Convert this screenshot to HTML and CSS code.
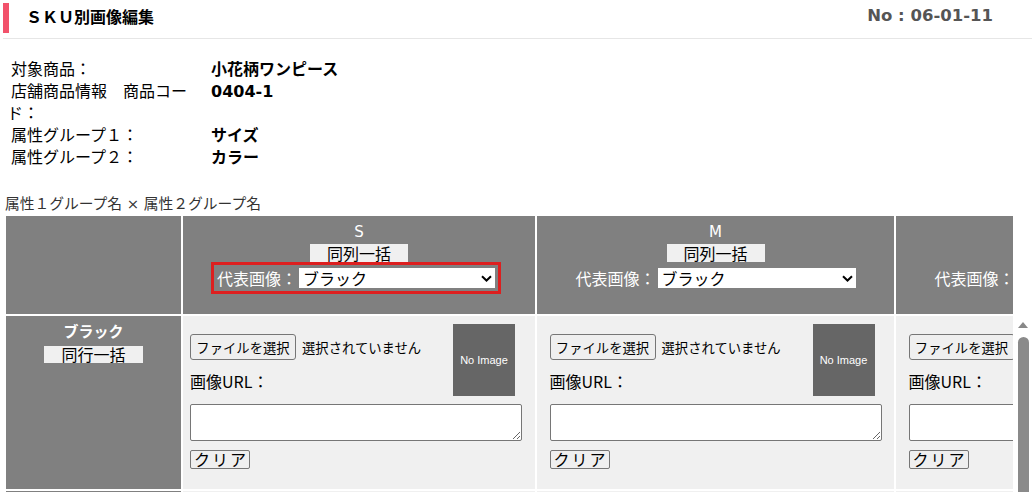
FILE: index.html
```html
<!DOCTYPE html>
<html lang="ja">
<head>
    <meta charset="UTF-8">
    <meta name="viewport" content="width=device-width, initial-scale=1.0">
    <title>ＳＫＵ別画像編集</title>
    <link rel="stylesheet" href="styles.css">
</head>
<body>
    <header class="page-head">
        <h1 class="page-title">ＳＫＵ別画像編集</h1>
        <span class="page-no">No : 06-01-11</span>
    </header>

    <div class="item-info">
        <div class="info-label">対象商品：</div>
        <div class="info-value">小花柄ワンピース</div>
        <div class="info-label">店舗商品情報　商品コード：</div>
        <div class="info-value">0404-1</div>
        <div class="info-label">属性グループ１：</div>
        <div class="info-value">サイズ</div>
        <div class="info-label">属性グループ２：</div>
        <div class="info-value">カラー</div>
    </div>

    <p class="grid-caption">属性１グループ名 × 属性２グループ名</p>

    <div class="sku-grid">
        <div class="grid-row grid-head">
            <div class="col-key head-cell"></div>
            <div class="col-s head-cell">
                <div class="size-name">S</div>
                <button class="bulk-btn">同列一括</button>
                <label class="main-pick is-error">代表画像：<select><option>ブラック</option><option>ホワイト</option></select></label>
            </div>
            <div class="col-m head-cell">
                <div class="size-name">M</div>
                <button class="bulk-btn">同列一括</button>
                <label class="main-pick">代表画像：<select><option>ブラック</option><option>ホワイト</option></select></label>
            </div>
            <div class="col-edge head-cell">
                <div class="edge-inner">
                    <div class="size-name">L</div>
                    <button class="bulk-btn">同列一括</button>
                    <label class="main-pick">代表画像：<select><option>ブラック</option><option>ホワイト</option></select></label>
                </div>
            </div>
        </div>

        <div class="body-wrap">
            <div class="grid-body">
                <div class="grid-row">
                    <div class="col-key key-cell">
                        <div class="color-name">ブラック</div>
                        <button class="bulk-btn row-btn">同行一括</button>
                    </div>
                    <div class="col-s upload-cell">
                        <div class="upload">
                            <div class="upload-top">
                                <div class="upload-fields">
                                    <div class="file-line"><button class="file-btn">ファイルを選択</button><span>選択されていません</span></div>
                                    <div class="url-label">画像URL：</div>
                                </div>
                                <div class="no-image">No Image</div>
                            </div>
                            <textarea class="url-box"></textarea>
                            <button class="clear-btn">クリア</button>
                        </div>
                    </div>
                    <div class="col-m upload-cell">
                        <div class="upload">
                            <div class="upload-top">
                                <div class="upload-fields">
                                    <div class="file-line"><button class="file-btn">ファイルを選択</button><span>選択されていません</span></div>
                                    <div class="url-label">画像URL：</div>
                                </div>
                                <div class="no-image">No Image</div>
                            </div>
                            <textarea class="url-box"></textarea>
                            <button class="clear-btn">クリア</button>
                        </div>
                    </div>
                    <div class="col-edge upload-cell">
                        <div class="edge-inner">
                            <div class="upload">
                                <div class="upload-top">
                                    <div class="upload-fields">
                                        <div class="file-line"><button class="file-btn">ファイルを選択</button><span>選択されていません</span></div>
                                        <div class="url-label">画像URL：</div>
                                    </div>
                                    <div class="no-image">No Image</div>
                                </div>
                                <textarea class="url-box"></textarea>
                                <button class="clear-btn">クリア</button>
                            </div>
                        </div>
                    </div>
                </div>

                <div class="grid-row">
                    <div class="col-key key-cell">
                        <div class="color-name">ホワイト</div>
                        <button class="bulk-btn row-btn">同行一括</button>
                    </div>
                    <div class="col-s upload-cell"></div>
                    <div class="col-m upload-cell"></div>
                    <div class="col-edge upload-cell"></div>
                </div>
            </div>

            <!-- vertical scrollbar of the row area -->
            <div class="scroll-rail">
                <span class="rail-up"></span>
                <span class="rail-thumb"></span>
            </div>
        </div>
    </div>
</body>
</html>
```

FILE: styles.css
```css
html,
body {
    margin: 0;
    height: 492px;
    overflow: hidden;
}
body {
    background-color: #fff;
    color: #000;
    font-family: "DejaVu Sans", "Noto Sans CJK JP", sans-serif;
    font-size: 16px;
}

/* page header */
.page-head {
    display: flex;
    justify-content: space-between;
    align-items: flex-start;
    height: 38px;
    margin-left: 3px;
    border-bottom: 1px solid #e6e6e6;
}
.page-title {
    margin: 3px 0 0;
    height: 30px;
    padding-left: 17px;
    border-left: 6px solid #f2526b;
    font-family: "Noto Sans CJK JP", sans-serif;
    font-size: 16px;
    font-weight: bold;
    line-height: 26px;
}
.page-no {
    margin-top: 3px;
    padding-right: 39px;
    color: #555;
    font-size: 16.5px;
    font-weight: bold;
    line-height: 26px;
}

/* item info */
.item-info {
    display: grid;
    grid-template-columns: 190px auto;
    justify-content: start;
    column-gap: 14px;
    margin-top: 20px;
    padding-left: 7px;
    line-height: 22px;
}
.info-label {
    text-indent: 4px;
}
.info-value {
    font-weight: bold;
}

.grid-caption {
    margin: 25px 0 0 5px;
    color: #333;
    font-size: 14.75px;
    line-height: 20px;
}

/* sku grid */
.sku-grid {
    margin: 2px 0 0 6px;
}
.grid-row {
    display: flex;
    gap: 2px;
}
.grid-row > * {
    flex: none;
    box-sizing: border-box;
}
.col-key {
    width: 175px;
}
.col-s {
    width: 352px;
}
.col-m {
    width: 357px;
}
/* last column is cut off by the right edge of the grid */
.col-edge {
    width: 117px;
    overflow: hidden;
}
.edge-inner {
    width: 357px;
}

.head-cell {
    height: 98px;
    padding-top: 6px;
    background-color: #808080;
    color: #fff;
    text-align: center;
    white-space: nowrap;
}
.size-name {
    font-size: 15px;
    line-height: 20px;
}
.bulk-btn {
    display: block;
    width: 98px;
    height: 18px;
    margin: 2px auto 0;
    padding: 0;
    border: 0;
    background-color: #f0f0f0;
    color: #000;
    font: 16px/18px "Noto Sans CJK JP", sans-serif;
}
.main-pick {
    display: inline-flex;
    align-items: center;
    gap: 2px;
    height: 20px;
    margin-top: 6px;
    font-family: "Noto Sans CJK JP", sans-serif;
    font-size: 16px;
}
.main-pick.is-error {
    margin-right: 6px;
    outline: 3px solid #dd1f1f;
    outline-offset: 3px;
}
.main-pick select {
    width: 198px;
    height: 20px;
    padding: 0 0 0 4px;
    border: 0;
    border-radius: 0;
    appearance: none;
    background: #fff url("data:image/svg+xml,%3Csvg xmlns='http://www.w3.org/2000/svg' width='11' height='7' viewBox='0 0 11 7'%3E%3Cpath d='M1 1.2l4.5 4.3 4.5-4.3' fill='none' stroke='%23000' stroke-width='2'/%3E%3C/svg%3E") no-repeat right 3px center;
    color: #000;
    font: 16px/20px "Noto Sans CJK JP", sans-serif;
}
.col-s .main-pick select {
    width: 196px;
}

.body-wrap {
    display: flex;
    margin-top: 2px;
}
.grid-body {
    width: 1007px;
    height: 176px;
    overflow: hidden;
}
.grid-body .grid-row + .grid-row {
    margin-top: 2px;
}
.scroll-rail {
    display: flex;
    flex-direction: column;
    align-items: flex-start;
    width: 17px;
    height: 176px;
    overflow: hidden;
}
.rail-up {
    margin: 6px 0 0 5px;
    border-left: 5.5px solid transparent;
    border-right: 5.5px solid transparent;
    border-bottom: 6px solid #888;
}
.rail-thumb {
    flex: none;
    width: 11px;
    height: 200px;
    margin: 9px 0 0 5px;
    border-radius: 6px 6px 0 0;
    background-color: #8a8a8a;
}

.key-cell {
    height: 173px;
    padding-top: 5px;
    background-color: #808080;
    color: #fff;
    text-align: center;
}
.color-name {
    font-family: "Noto Sans CJK JP", sans-serif;
    font-size: 15px;
    font-weight: bold;
    line-height: 20px;
}
.row-btn {
    width: 99px;
    height: 17px;
    margin-top: 5px;
    line-height: 17px;
}

.upload-cell {
    height: 173px;
    padding-top: 8px;
    background-color: #f0f0f0;
}
.upload {
    width: 332px;
    margin: 0 auto;
    font-family: "Noto Sans CJK JP", sans-serif;
}
.col-s .upload {
    margin-left: 7px;
}
.upload-top {
    display: flex;
    justify-content: space-between;
}
.upload-fields {
    margin-top: 10px;
}
.file-line {
    display: flex;
    align-items: center;
    gap: 6px;
    font-size: 13.33px;
    white-space: nowrap;
}
.file-btn {
    width: 106px;
    height: 26px;
    padding: 0;
    border: 1px solid #767676;
    border-radius: 3px;
    background-color: #efefef;
    color: #000;
    font: 13.33px "Noto Sans CJK JP", sans-serif;
}
.url-label {
    margin-top: 11px;
    font-size: 16px;
    line-height: 20px;
}
.no-image {
    display: flex;
    justify-content: center;
    align-items: center;
    width: 62px;
    height: 72px;
    margin-right: 7px;
    background-color: #666;
    color: #fff;
    font: 11px "Liberation Sans", Arial, sans-serif;
}
.url-box {
    display: block;
    box-sizing: border-box;
    width: 332px;
    height: 37px;
    margin-top: 8px;
    border: 1px solid #767676;
    border-radius: 2px;
    background-color: #fff;
}
.clear-btn {
    display: block;
    height: 19px;
    margin-top: 9px;
    padding: 0 1px 0 3px;
    border: 1px solid #767676;
    border-radius: 2px;
    background-color: #efefef;
    color: #000;
    font: 16px/17px "Noto Sans CJK JP", sans-serif;
    letter-spacing: 2px;
}
```
